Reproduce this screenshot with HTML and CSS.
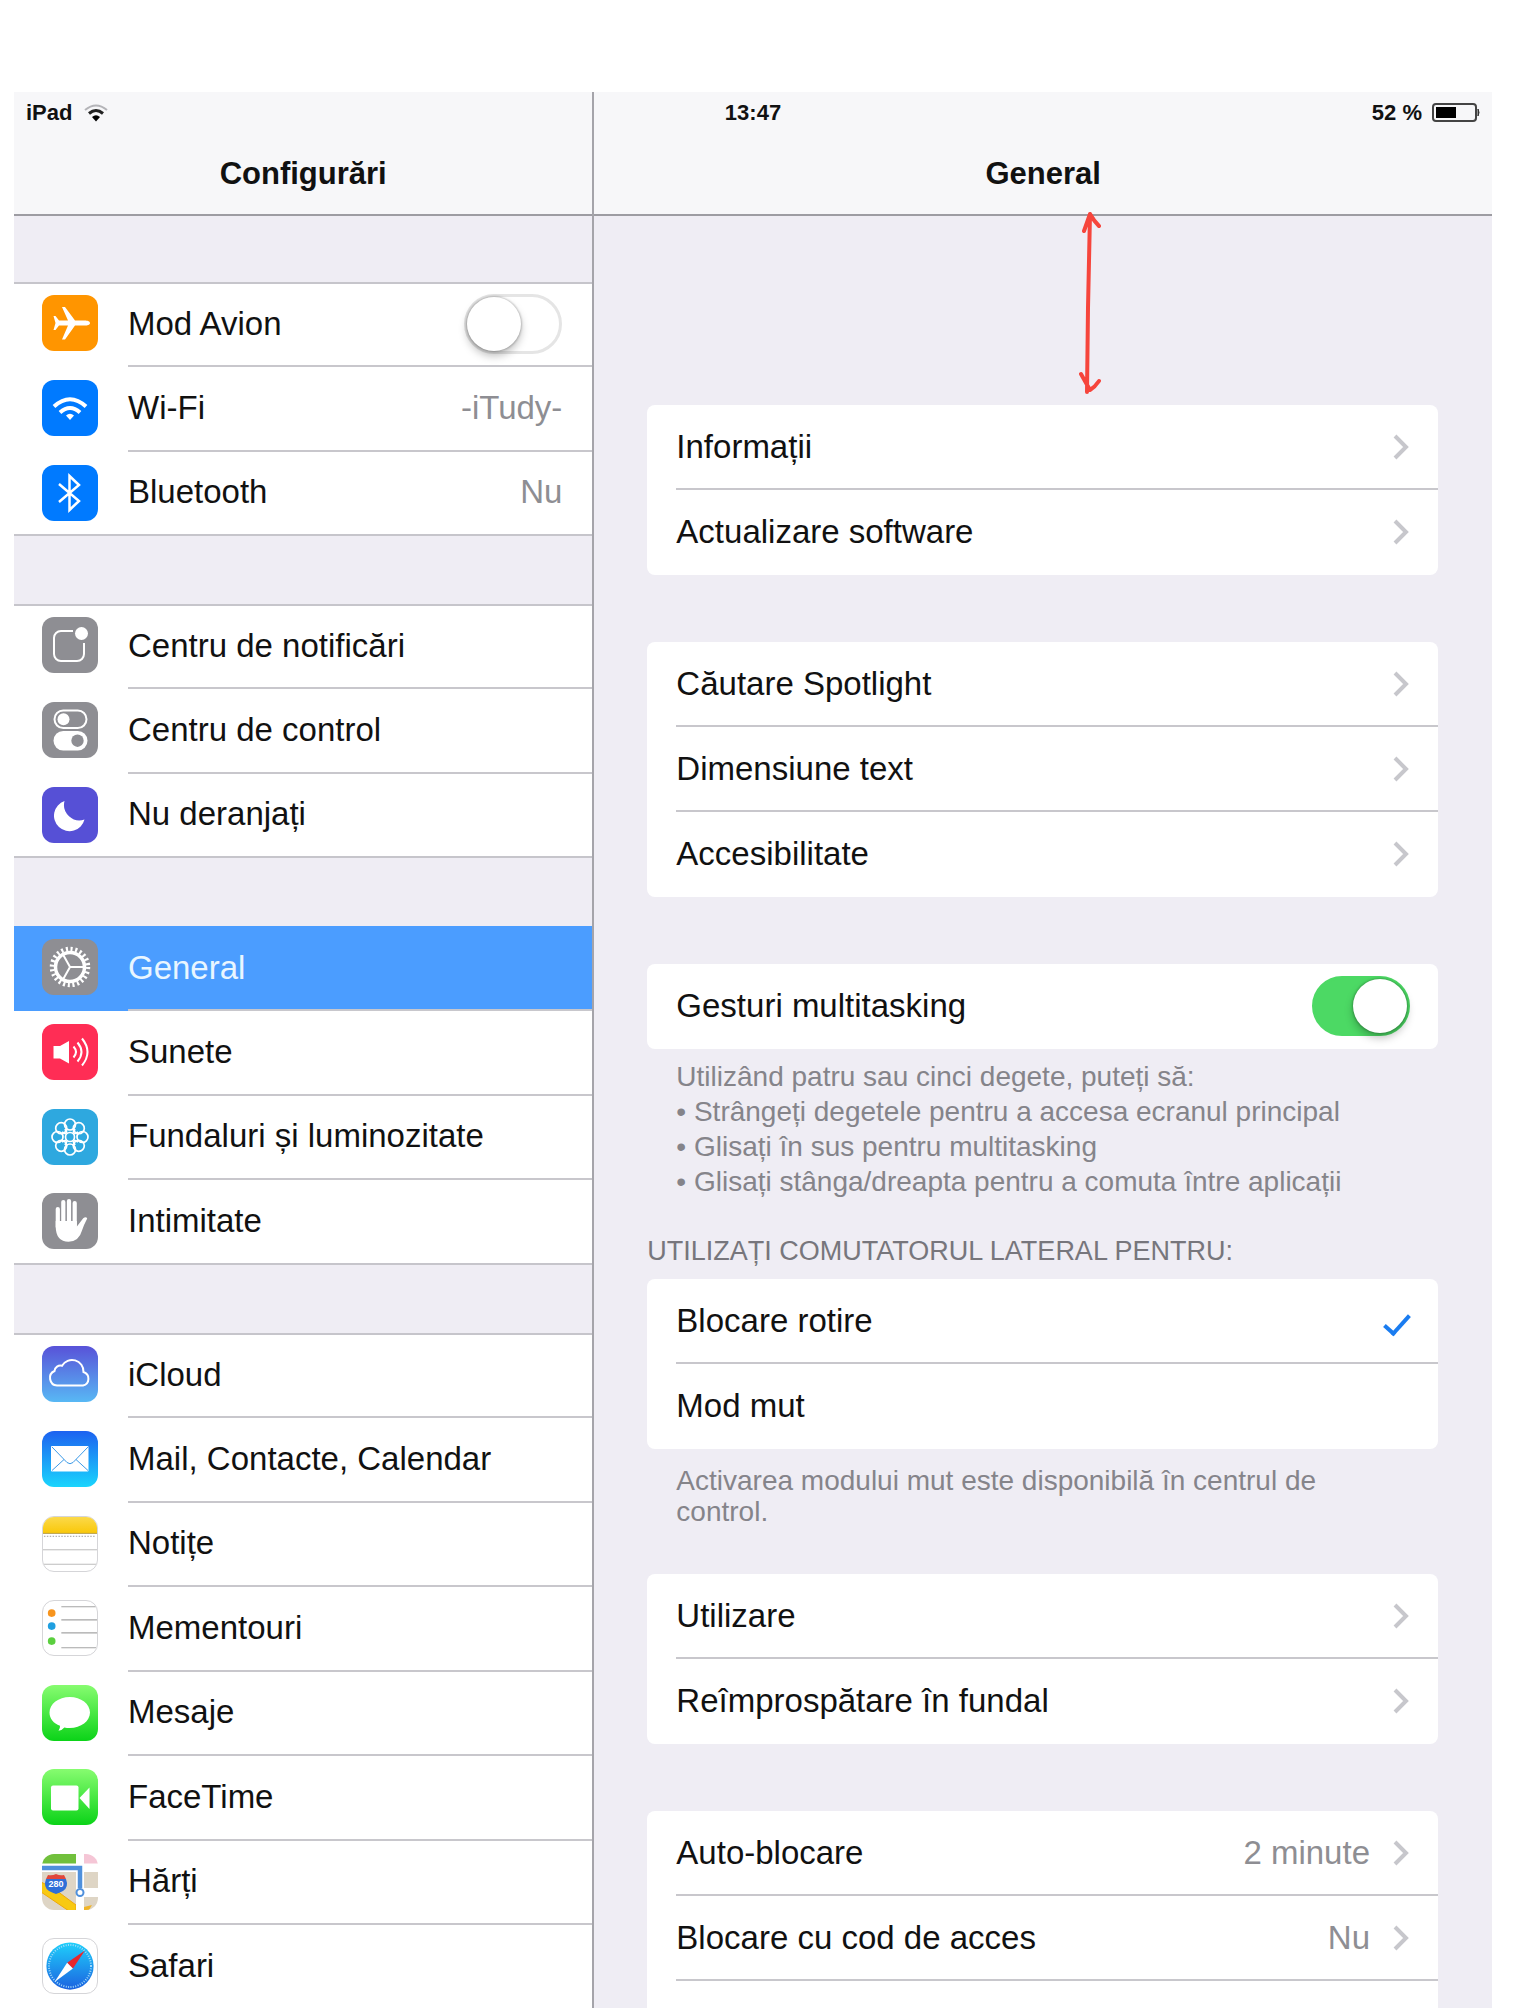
FILE: index.html
```html
<!DOCTYPE html>
<html lang="ro">
 <head>
  <meta charset="utf-8">
  <title>General</title>
  <link rel="stylesheet" href="styles.css">
 </head>

<body>
 <div class="screen">

  <div class="status">
   <div class="statusLeft">
    <span>iPad</span>
    <svg width="24" height="18" viewBox="0 0 24 18" fill="none">
     <path d="M1 6Q12-3 23 6" stroke="#b4b4b8" stroke-width="2"/>
     <path d="M5 9.500Q12 3.500 19 9.500" stroke="#222" stroke-width="3"/>
     <path d="M8 13Q12 9.500 16 13L12 17.500z" fill="#000"/>
    </svg>
   </div>
   <span class="clock">13:47</span>
   <div class="statusRight">
    <span>52 %</span>
    <svg width="48" height="20" viewBox="0 0 48 20" fill="none">
     <rect x="1" y="1" width="43" height="17" rx="3" stroke="#444" stroke-width="2"/>
     <rect x="4" y="4" width="20" height="11" fill="#000"/>
     <path d="M46 6q2 3.500 0 7z" fill="#333" stroke="#333"/>
    </svg>
   </div>
  </div>

  <nav class="sidebar">
   <header class="bar"><h2>Configurări</h2></header>

   <ul class="group">
    <li>
     <label class="row">
      <svg class="icon orange" viewBox="0 0 56 56"><path fill="#fff" d="M48 28c0-2-3-2.600-5-2.600H33L23 12h-3l6 13.400h-9L13.500 21h-2l2 7-2 7h2l3.500-4.400h9L20 44.500h3l10-13.900h10c2 0 5-.6 5-2.600z"/></svg>
      <span class="body"><span class="name">Mod Avion</span><input type="checkbox" class="switch"></span>
     </label>
    </li>
    <li>
     <a class="row" href="#wifi">
      <svg class="icon blue" viewBox="0 0 56 56" fill="none" stroke="#fff" stroke-width="4"><path d="M12 26.500Q28 12 44 26.500M18 32.500Q28 23.500 38 32.500"/><path d="M24 35.500Q28 32 32 35.500L28 40z" fill="#fff" stroke="none"/></svg>
      <span class="body"><span class="name">Wi-Fi</span><span class="value">-iTudy-</span></span>
     </a>
    </li>
    <li>
     <a class="row" href="#bluetooth">
      <svg class="icon blue" viewBox="0 0 56 56" fill="none" stroke="#fff" stroke-width="2.500"><path d="M17 19l20 17-9.500 9V11l9.500 9-20 17"/></svg>
      <span class="body"><span class="name">Bluetooth</span><span class="value">Nu</span></span>
     </a>
    </li>
   </ul>

   <ul class="group">
    <li>
     <a class="row" href="#notificari">
      <svg class="icon gray" viewBox="0 0 56 56" fill="none" stroke="#fff" stroke-width="2"><path d="M31 14H19a7 7 0 0 0-7 7v16a7 7 0 0 0 7 7h16a7 7 0 0 0 7-7V26"/><circle cx="39.500" cy="16.500" r="6.500" fill="#fff" stroke="none"/></svg>
      <span class="body"><span class="name">Centru de notificări</span></span>
     </a>
    </li>
    <li>
     <a class="row" href="#control">
      <svg class="icon gray" viewBox="0 0 56 56"><rect x="12.500" y="8.500" width="32" height="17.500" rx="8.700" fill="none" stroke="#fff" stroke-width="2"/><circle cx="21.500" cy="17.200" r="6" fill="#fff"/><rect x="11.500" y="29" width="34" height="19.500" rx="9.700" fill="#fff"/><circle cx="35.500" cy="38.700" r="6.200" fill="#8e8e93"/></svg>
      <span class="body"><span class="name">Centru de control</span></span>
     </a>
    </li>
    <li>
     <a class="row" href="#deranj">
      <svg class="icon purple" viewBox="0 0 56 56"><path fill="#fff" d="M22.500 14A15.500 15.500 0 1 0 42.500 32.500A15.500 15.500 0 0 1 22.500 14z"/></svg>
      <span class="body"><span class="name">Nu deranjați</span></span>
     </a>
    </li>
   </ul>

   <ul class="group">
    <li class="selected">
     <a class="row" href="#general" aria-current="page">
      <svg class="icon gray" viewBox="0 0 56 56" fill="none" stroke="#fff">
       <circle cx="28" cy="28" r="14.500" stroke-width="3.500"/>
       <circle cx="28" cy="28" r="18" stroke-width="4.500" stroke-dasharray="2.100 2.612"/>
       <path stroke-width="2" d="M28 28h14M28 28l-7-12.500M28 28l-7 12.500"/>
      </svg>
      <span class="body"><span class="name">General</span></span>
     </a>
    </li>
    <li>
     <a class="row" href="#sunete">
      <svg class="icon red" viewBox="0 0 56 56" fill="none" stroke="#fff" stroke-width="2"><path fill="#fff" stroke="none" d="M11.500 22H18l9-5v22.500l-9-5h-6.500z"/><path d="M31.500 22.500q5 5.500 0 11M35.500 18.500q8 9.500 0 19M40 14.500q11 13.500 0 27"/></svg>
      <span class="body"><span class="name">Sunete</span></span>
     </a>
    </li>
    <li>
     <a class="row" href="#fundaluri">
      <svg class="icon cyan" viewBox="0 0 56 56" fill="none" stroke="#fff" stroke-width="1.700">
       <circle cx="28" cy="28" r="4.500"/>
       <circle cx="28" cy="15.500" r="5.500"/><circle cx="28" cy="40.500" r="5.500"/>
       <circle cx="15.500" cy="28" r="5.500"/><circle cx="40.500" cy="28" r="5.500"/>
       <circle cx="19.200" cy="19.200" r="5.500"/><circle cx="36.800" cy="19.200" r="5.500"/>
       <circle cx="19.200" cy="36.800" r="5.500"/><circle cx="36.800" cy="36.800" r="5.500"/>
       <path d="M25 24l-2-4M31 24l2-4M25 32l-2 4M31 32l2 4M24 25l-4-2M24 31l-4 2M32 25l4-2M32 31l4 2"/>
      </svg>
      <span class="body"><span class="name">Fundaluri și luminozitate</span></span>
     </a>
    </li>
    <li>
     <a class="row" href="#intimitate">
      <svg class="icon gray" viewBox="0 0 56 56" fill="none" stroke="#fff" stroke-width="4.200" stroke-linecap="round"><path d="M15.800 16v18M21.300 9v22M27 8v22M32.700 10v22"/><path stroke="none" fill="#fff" d="M13.700 28h21.200v5.500l6.300-8.300q3-1.800 4 .3-3.200 6-5.200 12-3 11-13.500 11.300Q14 48.500 13.700 34z"/></svg>
      <span class="body"><span class="name">Intimitate</span></span>
     </a>
    </li>
   </ul>

   <ul class="group">
    <li>
     <a class="row" href="#icloud">
      <svg class="icon cloud" viewBox="0 0 56 56" fill="none" stroke="#fff" stroke-width="2"><path d="M15 39.500A7.600 7.600 0 0 1 12.500 25A6 6 0 0 1 20 19.800A11.500 11.500 0 0 1 41.500 26A7 7 0 0 1 41 39.500z"/></svg>
      <span class="body"><span class="name">iCloud</span></span>
     </a>
    </li>
    <li>
     <a class="row" href="#mail">
      <svg class="icon mail" viewBox="0 0 56 56" fill="none" stroke="#3d9be8" stroke-width="1"><rect x="9" y="15" width="37.500" height="25.500" rx="1" fill="#fff" stroke="none"/><path d="M10 16l15 15.500q3 2.500 6 0L46 16M10 39.500l12-11M46 39.500l-12-11"/></svg>
      <span class="body"><span class="name">Mail, Contacte, Calendar</span></span>
     </a>
    </li>
    <li>
     <a class="row" href="#notite">
      <svg class="icon paper" viewBox="0 0 56 56" fill="none" stroke="#b9b9b9" stroke-width="1">
       <defs><linearGradient id="yellow" x2="0" y2="1"><stop stop-color="#fbd94a"/><stop offset="1" stop-color="#f9c80a"/></linearGradient></defs>
       <path d="M0 0h56v16.500H0z" fill="url(#yellow)" stroke="none"/><path d="M0 17h56" stroke="#b59a3a"/><path d="M1 20h54" stroke="#999" stroke-dasharray="1.500 1.500"/><path d="M0 34h56M0 49h56"/>
      </svg>
      <span class="body"><span class="name">Notițe</span></span>
     </a>
    </li>
    <li>
     <a class="row" href="#mementouri">
      <svg class="icon paper" viewBox="0 0 56 56" fill="none" stroke="#a5a5a5" stroke-width="1.200"><path d="M19 6h36M19 19.500h37M19 33h37M19 48.500h36"/><g stroke="none"><circle cx="9" cy="12.500" r="4" fill="#f7941d"/><circle cx="9" cy="26" r="4" fill="#1f9fe0"/><circle cx="9" cy="41.500" r="4" fill="#5bcf3f"/></g></svg>
      <span class="body"><span class="name">Mementouri</span></span>
     </a>
    </li>
    <li>
     <a class="row" href="#mesaje">
      <svg class="icon green" viewBox="0 0 56 56"><path fill="#fff" d="M27.800 12C39 12 48 19 48 27.500S39 43 27.800 43q-3 0-5.500-.6-2 2.600-5.800 3.400 1.800-2.600 1.500-5C11.500 38.500 7.500 33.500 7.500 27.500 7.500 19 16.500 12 27.800 12z"/></svg>
      <span class="body"><span class="name">Mesaje</span></span>
     </a>
    </li>
    <li>
     <a class="row" href="#facetime">
      <svg class="icon green" viewBox="0 0 56 56" fill="#fff"><rect x="9" y="16.500" width="27.500" height="25" rx="2"/><path d="M37.500 29l10-10.500v21.500z"/></svg>
      <span class="body"><span class="name">FaceTime</span></span>
     </a>
    </li>
    <li>
     <a class="row" href="#harti">
      <svg class="icon" viewBox="0 0 56 56">
       <path fill="#fff" d="M0 0h56v56H0z"/>
       <path fill="#71c03c" d="M0 0h34v9.500H0z"/><path fill="#f5c6d6" d="M42 0h14v9.500H42z"/>
       <path fill="#ded5c5" d="M0 18h34v38H0zM42 18h14v16H42zM42 43h14v13H42z"/>
       <path fill="#f8c912" stroke="#eda80b" d="M-1 28l12 6 23 17v6h-7L-1 38z"/><path fill="#f0b428" d="M42 53l8-2-3 5h-5z"/>
       <path fill="#fff" d="M34 18h8v38h-8z"/>
       <path fill="none" stroke="#4f90dc" stroke-width="4.500" d="M0 14h38v20"/>
       <circle cx="38" cy="38.500" r="3.500" fill="#fff" stroke="#4f90dc" stroke-width="2"/>
       <path fill="#2f6fd8" d="M4 25h20q3 8-3 12-4 2-7 3-3-1-7-3-6-4-3-12z"/><path fill="#e0473c" d="M4 25l2-4q4 1 8-1 4 2 8 1l2 4z"/>
       <text class="shield" x="14" y="33" text-anchor="middle">280</text>
      </svg>
      <span class="body"><span class="name">Hărți</span></span>
     </a>
    </li>
    <li>
     <a class="row" href="#safari">
      <svg class="icon paper" viewBox="0 0 56 56">
       <defs><linearGradient id="compass" x2="0" y2="1"><stop stop-color="#1fd0fb"/><stop offset="1" stop-color="#1c62e0"/></linearGradient></defs>
       <circle cx="28" cy="28" r="24.500" fill="url(#compass)"/>
       <circle cx="28" cy="28" r="21.800" fill="none" stroke="#a5dcfa" stroke-width="2" stroke-dasharray="1 1.500"/>
       <path fill="#e8262c" d="M43.500 12L25 24.500l6 6z"/><path fill="#fff" d="M12 44.500l13-20 6 6z"/>
      </svg>
      <span class="body"><span class="name">Safari</span></span>
     </a>
    </li>
   </ul>
  </nav>

  <main class="detail">
   <header class="bar"><h1>General</h1></header>

   <svg class="arrow" width="30" height="190" viewBox="0 0 30 190" fill="none">
    <path d="M13 4Q12 60 11 98L10 182M7 21L13 4Q17 11 22 16M4 164L13 180Q18 177 22 171"/>
   </svg>

   <div class="cards">
    <ul class="card first">
     <li><a class="item" href="#info"><span class="name">Informații</span><svg class="chevron" viewBox="0 0 18 26"><path d="M3 2l11 11L3 24"/></svg></a></li>
     <li><a class="item" href="#software"><span class="name">Actualizare software</span><svg class="chevron" viewBox="0 0 18 26"><path d="M3 2l11 11L3 24"/></svg></a></li>
    </ul>

    <ul class="card">
     <li><a class="item" href="#spotlight"><span class="name">Căutare Spotlight</span><svg class="chevron" viewBox="0 0 18 26"><path d="M3 2l11 11L3 24"/></svg></a></li>
     <li><a class="item" href="#text"><span class="name">Dimensiune text</span><svg class="chevron" viewBox="0 0 18 26"><path d="M3 2l11 11L3 24"/></svg></a></li>
     <li><a class="item" href="#acces"><span class="name">Accesibilitate</span><svg class="chevron" viewBox="0 0 18 26"><path d="M3 2l11 11L3 24"/></svg></a></li>
    </ul>

    <ul class="card">
     <li><label class="item"><span class="name">Gesturi multitasking</span><input type="checkbox" class="switch" checked></label></li>
    </ul>
    <p class="note list">Utilizând patru sau cinci degete, puteți să:<br>• Strângeți degetele pentru a accesa ecranul principal<br>• Glisați în sus pentru multitasking<br>• Glisați stânga/dreapta pentru a comuta între aplicații</p>

    <h3 id="lateral">UTILIZAȚI COMUTATORUL LATERAL PENTRU:</h3>
    <ul class="card choices" role="radiogroup" aria-labelledby="lateral">
     <li><label class="item"><span class="name">Blocare rotire</span><input type="radio" name="comutator" checked></label></li>
     <li><label class="item"><span class="name">Mod mut</span><input type="radio" name="comutator"></label></li>
    </ul>
    <p class="note">Activarea modului mut este disponibilă în centrul de control.</p>

    <ul class="card usage">
     <li><a class="item" href="#utilizare"><span class="name">Utilizare</span><svg class="chevron" viewBox="0 0 18 26"><path d="M3 2l11 11L3 24"/></svg></a></li>
     <li><a class="item" href="#fundal"><span class="name">Reîmprospătare în fundal</span><svg class="chevron" viewBox="0 0 18 26"><path d="M3 2l11 11L3 24"/></svg></a></li>
    </ul>

    <ul class="card">
     <li><a class="item" href="#auto"><span class="name">Auto-blocare</span><span class="value">2 minute</span><svg class="chevron" viewBox="0 0 18 26"><path d="M3 2l11 11L3 24"/></svg></a></li>
     <li><a class="item" href="#cod"><span class="name">Blocare cu cod de acces</span><span class="value">Nu</span><svg class="chevron" viewBox="0 0 18 26"><path d="M3 2l11 11L3 24"/></svg></a></li>
     <li class="item"></li>
    </ul>
   </div>
  </main>

 </div>
</body>
</html>
```
FILE: styles.css
```css
* {
   box-sizing: border-box;
  }

body {
      margin: 0;
      padding: 92px 44px 0 14px;
      height: 100vh;
      overflow: hidden;
      background: #fff;
      color: #111;
      font-family: "Liberation Sans", Helvetica, Arial, sans-serif;
      font-size: 33px;
     }

h1, h2, h3, p, ul {
                   margin: 0;
                   padding: 0;
                   list-style: none;
                  }

a {
   color: inherit;
   text-decoration: none;
  }

.screen {
         position: relative;
         display: grid;
         grid-template-columns: minmax(0, 9fr) minmax(0, 14fr);
         height: 100%;
         overflow: hidden;
         background: #efedf4;
        }

/* status bar, laid over both title bars */
.status {
         position: absolute;
         top: 0;
         left: 0;
         right: 0;
         display: grid;
         grid-template-columns: 1fr auto 1fr;
         align-items: center;
         height: 42px;
         padding: 0 12px;
         font-size: 22px;
         font-weight: bold;
         z-index: 1;
        }

.statusLeft, .statusRight {
                           display: flex;
                           align-items: center;
                           gap: 10px;
                          }

.statusLeft {
             gap: 12px;
            }

.statusRight {
              justify-content: flex-end;
             }

.bar {
      display: flex;
      align-items: center;
      justify-content: center;
      height: 124px;
      padding-top: 42px;
      background: #f7f7f9;
      border-bottom: 2px solid #9d9ca2;
     }

.bar h1, .bar h2 {
                  font-size: 31px;
                 }

/* left column */
.group {
        margin-top: 68px;
        background: #fff;
        border-top: 2px solid #c6c5cb;
       }

.bar + .group {
               margin-top: 66px;
              }

.row {
      display: flex;
      height: 84px;
      padding-left: 28px;
      gap: 30px;
     }

.group li:nth-child(even) .row {
                                height: 85px;
                               }

.group li:first-child .row {
                            height: 83px;
                           }

.group li:last-child .row {
                           border-bottom: 2px solid #c6c5cb;
                          }

.group li:last-child .body {
                            border-bottom: 0;
                           }

.body {
       flex: 1;
       display: flex;
       align-items: center;
       padding: 0 30px 2px 0;
       border-bottom: 2px solid #c8c7cc;
      }

.name {
       flex: 1;
      }

.value {
        color: #8e8e93;
       }

.selected {
           margin-top: -2px;
           padding-top: 2px;
           background: #4b9dff;
           color: #e9f6ff;
          }

.icon {
       flex: none;
       width: 56px;
       height: 56px;
       margin-top: 13px;
       border-radius: 12px;
      }

.group li:first-child .icon {
                             margin-top: 11px;
                            }

.orange { background: #ff9500; }
.blue { background: #007aff; }
.gray { background: #8e8e93; }
.purple { background: #5650d6; }
.red { background: #ff2d55; }
.cyan { background: #2ea8df; }
.cloud { background: linear-gradient(#5852d8, #58b8f4); }
.mail { background: linear-gradient(#1d62f0, #1ad5fd); }
.green { background: linear-gradient(#87fc70, #0bd318); }

.paper {
        background: #fff;
        border: 1px solid #d5d5d8;
       }

.shield {
         fill: #fff;
         font-size: 9px;
         font-weight: bold;
        }

.switch {
         appearance: none;
         width: 98px;
         height: 60px;
         margin: 0;
         border: 3px solid #e5e5e5;
         border-radius: 30px;
         background: #fff;
        }

.switch::before {
                 content: "";
                 display: block;
                 width: 54px;
                 height: 54px;
                 border-radius: 50%;
                 background: #fff;
                 box-shadow: 0 0 2px 1px rgba(0, 0, 0, 0.2), 0 5px 8px rgba(0, 0, 0, 0.25);
                }

.switch:checked {
                 border-color: #4cd964;
                 background: #4cd964;
                }

.switch:checked::before {
                         margin-left: auto;
                        }

/* right column */
.detail {
         position: relative;
         border-left: 2px solid #a5a4aa;
        }

.arrow {
        position: absolute;
        top: 118px;
        left: calc(50% + 34px);
        stroke: #f6453c;
        stroke-width: 4;
        stroke-linecap: round;
        stroke-linejoin: round;
       }

.cards {
        padding: 0 54px 0 53px;
       }

.card {
       margin-top: 67px;
       border-radius: 8px;
       background: #fff;
      }

.first {
        margin-top: 189px;
       }

.item {
       display: flex;
       align-items: center;
       height: 85px;
       margin-left: 29px;
       padding-right: 28px;
       border-bottom: 2px solid #c8c7cc;
      }

.card li:last-child .item {
                           border-color: transparent;
                          }

.chevron {
          width: 18px;
          height: 26px;
          margin-left: 22px;
          fill: none;
          stroke: #c7c7cc;
          stroke-width: 4;
         }

.note {
       padding: 16px 58px 0 29px;
       color: #85848a;
       font-size: 28px;
       line-height: 31px;
      }

.list {
       padding-top: 10px;
       padding-right: 28px;
       line-height: 35px;
      }

h3 {
    margin: 36px 0 12px;
    color: #77767c;
    font-size: 27px;
    font-weight: normal;
    line-height: 32px;
   }

.choices {
          margin-top: 0;
         }

.usage {
        margin-top: 47px;
       }

/* the tick of the chosen line */
.choices input {
                appearance: none;
                width: 28px;
                height: 24px;
                margin: 0;
               }

.choices input:checked::before {
                                content: "";
                                display: block;
                                width: 10px;
                                height: 22px;
                                margin-left: 8px;
                                border: solid #1a7cf0;
                                border-width: 0 4px 4px 0;
                                transform: rotate(42deg);
                               }
```
